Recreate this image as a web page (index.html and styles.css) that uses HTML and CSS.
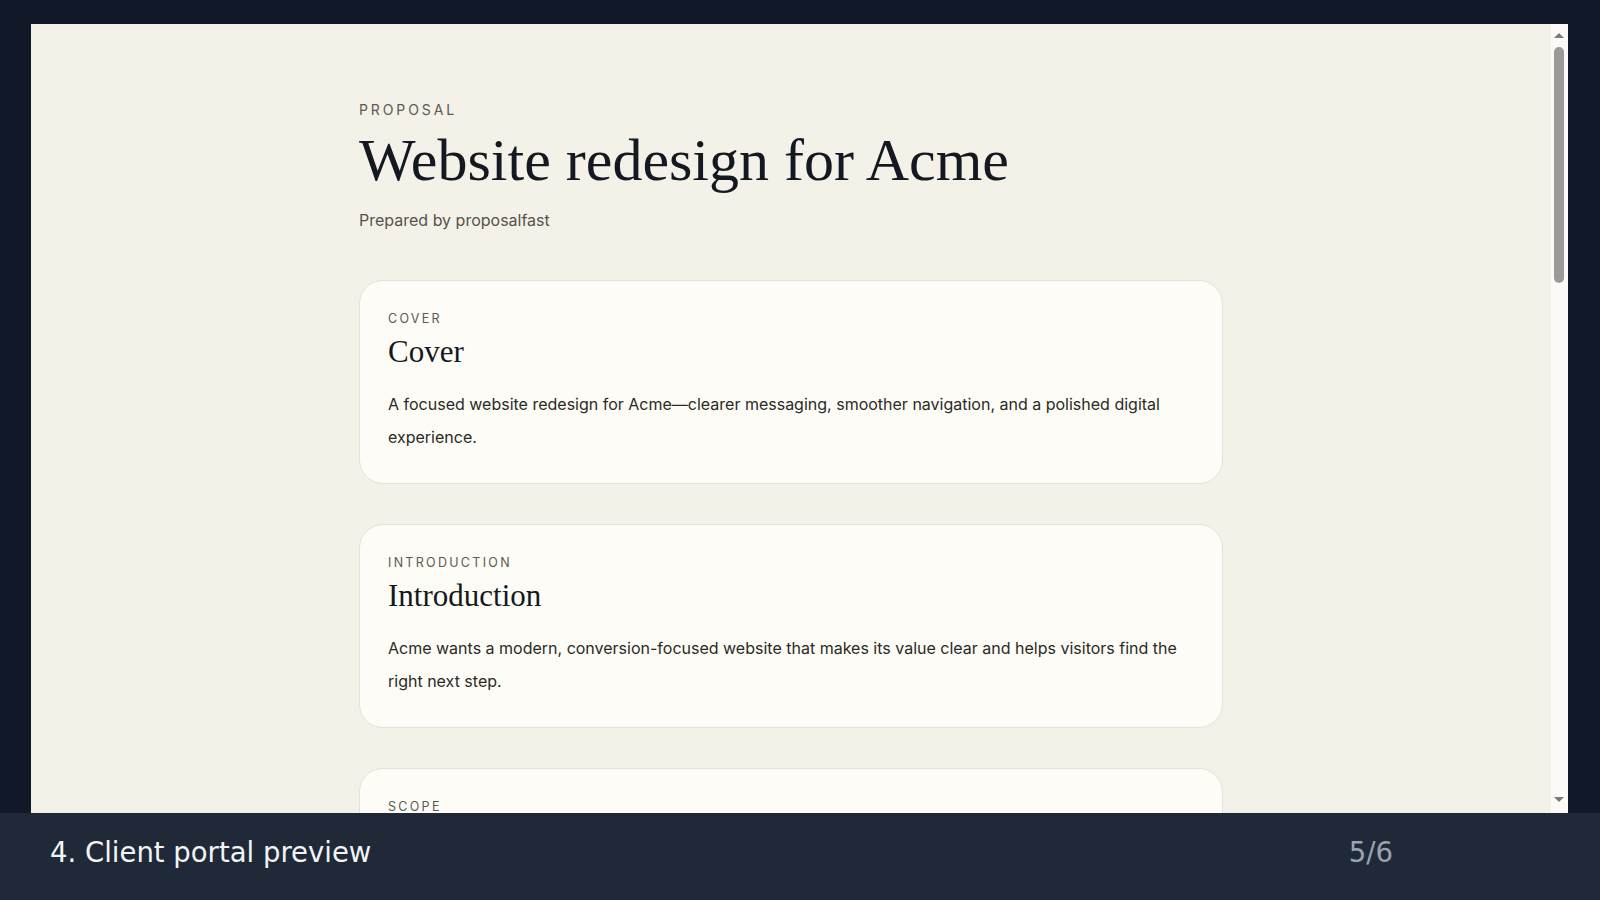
FILE: index.html
```html
<!DOCTYPE html>
<html lang="en">
<head>
    <meta charset="UTF-8">
    <meta name="viewport" content="width=device-width, initial-scale=1.0">
    <title>Client portal preview</title>
    <link rel="stylesheet" href="styles.css">
</head>
<body>

    <div class="stage">
        <div class="portal">
            <div class="viewport">
                <div class="doc">
                    <div class="eyebrow">Proposal</div>
                    <h1 class="doc-title">Website redesign for Acme</h1>
                    <p class="byline">Prepared by proposalfast</p>

                    <section class="card">
                        <div class="card-label">Cover</div>
                        <h2 class="card-title">Cover</h2>
                        <p class="card-text">A focused website redesign for Acme—clearer messaging, smoother navigation, and a polished digital experience.</p>
                    </section>

                    <section class="card">
                        <div class="card-label">Introduction</div>
                        <h2 class="card-title">Introduction</h2>
                        <p class="card-text">Acme wants a modern, conversion-focused website that makes its value clear and helps visitors find the right next step.</p>
                    </section>

                    <section class="card">
                        <div class="card-label">Scope</div>
                        <h2 class="card-title">Scope</h2>
                        <p class="card-text">Discovery workshop, sitemap and content plan, wireframes for key pages, visual design system, and a responsive build on the existing CMS.</p>
                    </section>

                    <section class="card">
                        <div class="card-label">Timeline</div>
                        <h2 class="card-title">Timeline</h2>
                        <p class="card-text">Six weeks from kickoff: two weeks of discovery and structure, two weeks of design, and two weeks of build, review and launch.</p>
                    </section>
                </div>
            </div>

            <!-- scrollbar of the preview frame -->
            <div class="rail">
                <span class="rail-up"></span>
                <div class="rail-track">
                    <div class="rail-thumb"></div>
                </div>
                <span class="rail-down"></span>
            </div>
        </div>
    </div>

    <div class="caption">
        <span class="caption-title">4. Client portal preview</span>
        <span class="caption-count">5/6</span>
    </div>

</body>
</html>
```

FILE: styles.css
```css
html, body {
    margin: 0;
    height: 100%;
}
body {
    background-color: #111827;
    display: flex;
    flex-direction: column;
    overflow: hidden;
}
.stage {
    flex: 1;
    padding: 24px 32px 0 31px;
    min-height: 0;
    display: flex;
}
.portal {
    flex: 1;
    display: flex;
    background-color: #f4f1e8;
    min-height: 0;
}
.viewport {
    flex: 1;
    overflow: hidden;
}

/* scrollbar */
.rail {
    width: 17px;
    flex-shrink: 0;
    background-color: #fbfaf6;
    display: flex;
    flex-direction: column;
    align-items: center;
    padding-right: 1px;
    box-sizing: border-box;
}
.rail-up,
.rail-down {
    width: 0;
    height: 0;
    border-left: 5px solid transparent;
    border-right: 5px solid transparent;
}
.rail-up {
    border-bottom: 5px solid #7a7a78;
    margin: 9px 0 8px;
}
.rail-down {
    border-top: 5px solid #7a7a78;
    margin: 0 0 11px;
}
.rail-track {
    flex: 1;
    width: 100%;
    display: flex;
    justify-content: center;
}
.rail-thumb {
    width: 10px;
    height: 236px;
    margin-top: 1px;
    border-radius: 5px;
    background-color: #9b9a97;
}

.doc {
    max-width: 864px;
    margin: 0 auto;
    padding: 78px 0 120px;
    font-family: Inter, "Liberation Sans", sans-serif;
}
.eyebrow {
    font-size: 14px;
    letter-spacing: 2.9px;
    text-transform: uppercase;
    color: #5b5a52;
    line-height: 16px;
}
.doc-title {
    font-family: "Liberation Serif", serif;
    font-weight: normal;
    font-size: 60px;
    line-height: 64px;
    color: #141821;
    margin: 10px 0 18px;
}
.byline {
    font-size: 16px;
    color: #55534c;
    margin: 0 0 50px;
}
.card {
    background-color: #fdfcf6;
    border: 1px solid #e6e2d6;
    border-radius: 24px;
    padding: 30px 28px 29px;
    margin-bottom: 40px;
}
.card-label {
    font-size: 12.5px;
    letter-spacing: 2.3px;
    text-transform: uppercase;
    color: #5b5a52;
    line-height: 16px;
}
.card-title {
    font-family: "Liberation Serif", serif;
    font-weight: normal;
    font-size: 31px;
    line-height: 36px;
    color: #141821;
    margin: 7px 0 18px;
}
.card-text {
    font-size: 16px;
    line-height: 33px;
    color: #2b2a26;
    margin: 0;
}
.caption {
    height: 87px;
    flex-shrink: 0;
    box-sizing: border-box;
    background-color: #1f2937;
    display: flex;
    align-items: center;
    justify-content: space-between;
    padding: 0 207px 10px 50px;
    font-family: "DejaVu Sans", sans-serif;
    font-size: 27.5px;
}
.caption-title {
    color: #f3f4f6;
}
.caption-count {
    color: #9ca3af;
}
```
